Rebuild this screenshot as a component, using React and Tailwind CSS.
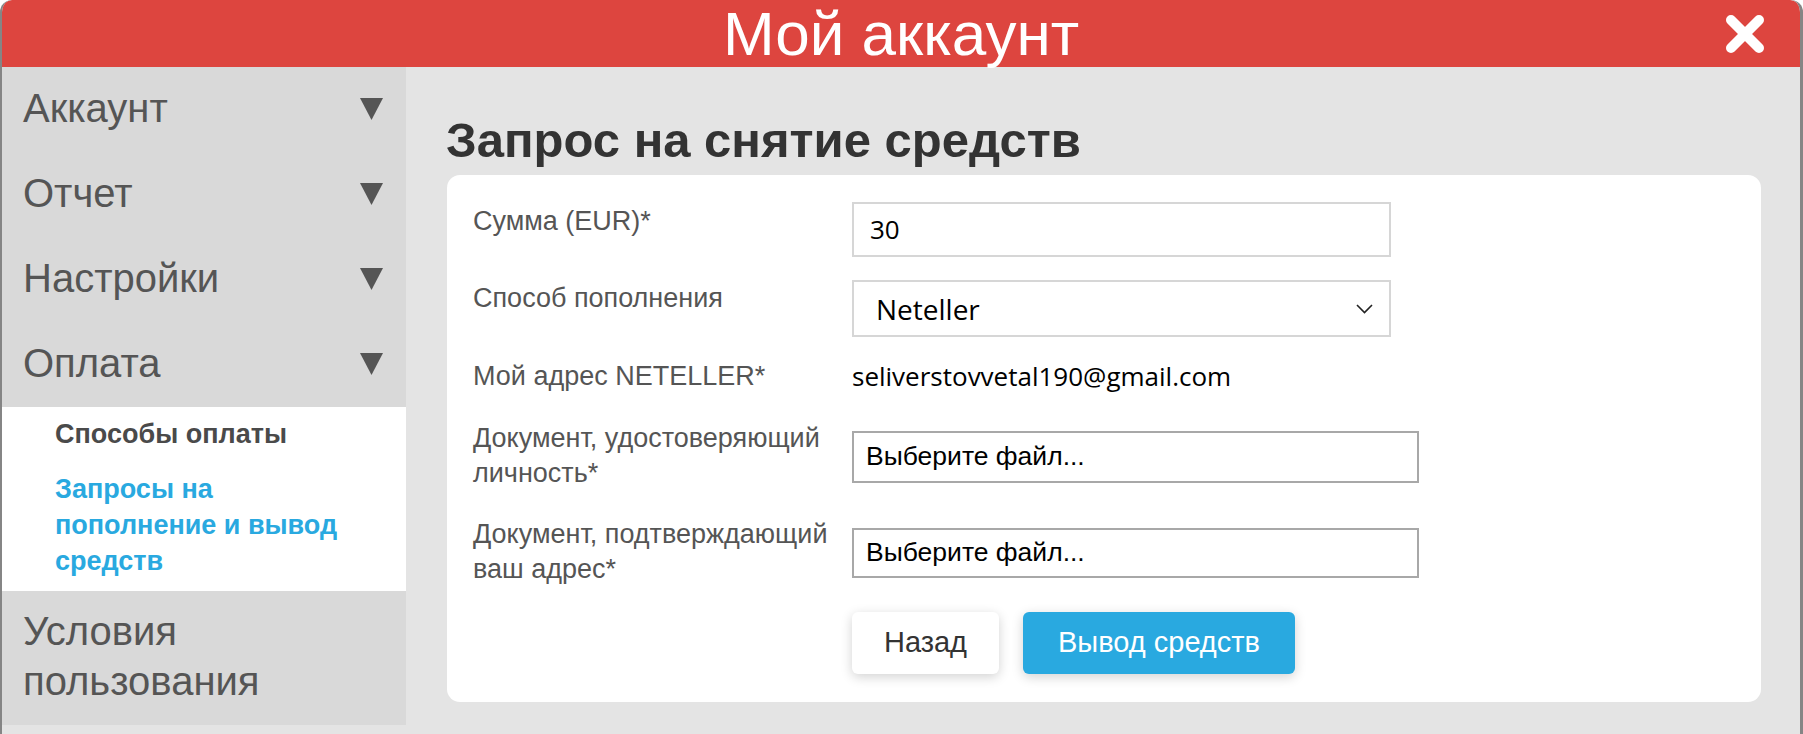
import React from "react";

const Arrow = () => (
  <svg width="23" height="22" viewBox="0 0 23 22" className="mt-[13px] shrink-0">
    <polygon points="0,0 23,0 11.5,22" fill="#555555" />
  </svg>
);

const NavItem = ({ label }) => (
  <div className="h-[85px] bg-[#d9d9d9] flex justify-between items-start pl-[21px] pr-[23px] pt-[18px]">
    <span className="text-[40px] leading-[46px] text-[#555555]">{label}</span>
    <Arrow />
  </div>
);

export default function App() {
  return (
    <div
      className="w-[1803px] h-[734px] overflow-hidden bg-[#e4e4e4] border-l-2 border-r-[3px] border-[#858585] rounded-t-[12px] flex flex-col"
      style={{ fontFamily: '"Liberation Sans", Arial, sans-serif' }}
    >
      <header className="relative h-[67px] shrink-0 bg-[#dd453f] flex items-center justify-center rounded-t-[10px]">
        <h1 className="text-[62px] leading-[67px] text-white">Мой аккаунт</h1>
        <button className="absolute right-[35px] top-[14px] w-[40px] h-[40px]">
          <svg width="40" height="40" viewBox="0 0 40 40">
            <line x1="6" y1="6" x2="34" y2="34" stroke="white" strokeWidth="10" strokeLinecap="round" />
            <line x1="34" y1="6" x2="6" y2="34" stroke="white" strokeWidth="10" strokeLinecap="round" />
          </svg>
        </button>
      </header>

      <div className="flex flex-1 min-h-0">
        <aside className="w-[404px] shrink-0 flex flex-col">
          <NavItem label="Аккаунт" />
          <NavItem label="Отчет" />
          <NavItem label="Настройки" />
          <NavItem label="Оплата" />
          <div className="bg-white pl-[53px] pt-[9px] pb-[12px] flex flex-col gap-[19px]">
            <span className="text-[27px] leading-[36px] font-bold text-[#4a4a4a]">Способы оплаты</span>
            <span className="text-[27px] leading-[36px] font-bold text-[#29a9e0] w-[320px]">
              Запросы на пополнение и вывод средств
            </span>
          </div>
          <div className="bg-[#d9d9d9] pl-[21px] pt-[15px] pb-[19px]">
            <span className="text-[40px] leading-[50px] text-[#555555] block w-[300px]">Условия пользования</span>
          </div>
        </aside>

        <main className="flex-1 pl-[41px] pr-[39px] pt-[45px]">
          <h2 className="text-[49px] leading-[56px] font-bold text-[#333333] -ml-[1px]">Запрос на снятие средств</h2>
          <div className="mt-[7px] bg-white rounded-[13px] pl-[26px] pt-[27px] pb-[28px] flex flex-col text-[#555555]">
            <div className="flex items-start">
              <label className="w-[379px] mt-[2px] text-[27px] leading-[35px]">Сумма (EUR)*</label>
              <div
                className="w-[539px] h-[55px] border-2 border-[#d6d6d6] flex items-center pl-[16px] text-[26px] text-black"
                style={{ fontFamily: '"Open Sans", "Noto Sans", sans-serif' }}
              >
                30
              </div>
            </div>

            <div className="flex items-start mt-[23px]">
              <label className="w-[379px] mt-[1px] text-[27px] leading-[35px]">Способ пополнения</label>
              <div
                className="w-[539px] h-[57px] border-2 border-[#d6d6d6] flex items-center justify-between pl-[22px] pr-[16px] text-[28px] text-black"
                style={{ fontFamily: '"Open Sans", "Noto Sans", sans-serif' }}
              >
                <span>Neteller</span>
                <svg width="17" height="10" viewBox="0 0 17 10">
                  <polyline points="1,1 8.5,8.5 16,1" fill="none" stroke="#222" strokeWidth="1.6" />
                </svg>
              </div>
            </div>

            <div className="flex items-start mt-[22px]">
              <label className="w-[379px] text-[27px] leading-[35px]">Мой адрес NETELLER*</label>
              <span
                className="text-[26px] leading-[35px] text-black"
                style={{ fontFamily: '"Open Sans", "Noto Sans", sans-serif' }}
              >
                seliverstovvetal190@gmail.com
              </span>
            </div>

            <div className="flex items-start mt-[27px]">
              <label className="w-[379px] text-[27px] leading-[35px]">
                Документ, удостоверяющий
                <br />
                личность*
              </label>
              <div className="mt-[10px] w-[567px] h-[52px] border-2 border-[#a8a8a8] flex items-center pl-[12px] text-[26.5px] text-black">
                Выберите файл...
              </div>
            </div>

            <div className="flex items-start mt-[26px]">
              <label className="w-[379px] text-[27px] leading-[35px]">
                Документ, подтверждающий
                <br />
                ваш адрес*
              </label>
              <div className="mt-[11px] w-[567px] h-[50px] border-2 border-[#a8a8a8] flex items-center pl-[12px] text-[26.5px] text-black">
                Выберите файл...
              </div>
            </div>

            <div className="flex items-center mt-[25px] pl-[379px] gap-[24px]">
              <button className="w-[147px] h-[62px] bg-white rounded-[6px] shadow-[0_3px_12px_rgba(0,0,0,0.18)] text-[29px] text-[#333333]">
                Назад
              </button>
              <button className="w-[272px] h-[62px] bg-[#29a9e0] rounded-[6px] shadow-[0_3px_12px_rgba(0,0,0,0.18)] text-[29px] text-white">
                Вывод средств
              </button>
            </div>
          </div>
        </main>
      </div>
    </div>
  );
}
